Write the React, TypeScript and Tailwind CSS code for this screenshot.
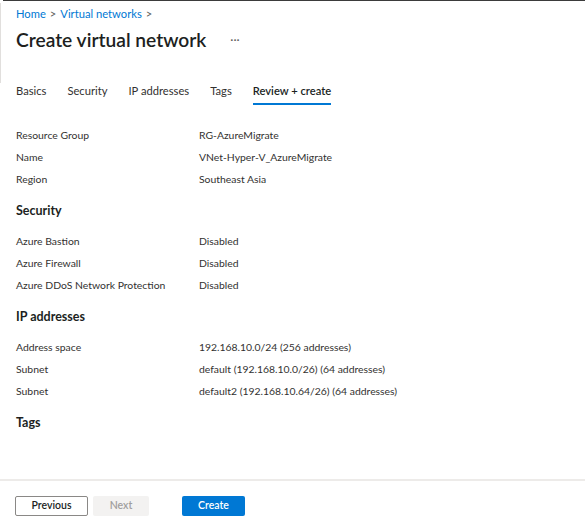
import { Fragment } from 'react';

const sections = [
  {
    title: null,
    rows: [
      ['Resource Group', 'RG-AzureMigrate'],
      ['Name', 'VNet-Hyper-V_AzureMigrate'],
      ['Region', 'Southeast Asia'],
    ],
  },
  {
    title: 'Security',
    rows: [
      ['Azure Bastion', 'Disabled'],
      ['Azure Firewall', 'Disabled'],
      ['Azure DDoS Network Protection', 'Disabled'],
    ],
  },
  {
    title: 'IP addresses',
    rows: [
      ['Address space', '192.168.10.0/24 (256 addresses)'],
      ['Subnet', 'default (192.168.10.0/26) (64 addresses)'],
      ['Subnet', 'default2 (192.168.10.64/26) (64 addresses)'],
    ],
  },
  { title: 'Tags', rows: [] },
];

const tabs = ['Basics', 'Security', 'IP addresses', 'Tags', 'Review + create'];

export default function App() {
  return (
    <div className="relative flex h-[529px] w-[585px] flex-col bg-white font-['Lato',sans-serif] text-[#323130]">
      <div className="absolute left-[3px] right-0 top-0 h-px bg-[#3b3b3b]" />
      <div className="absolute left-0 top-[3px] h-[80px] w-px bg-[#e1dfdd]" />

      <div className="flex-1 px-4">
        <div className="flex items-center gap-1 pt-[6px] text-[11.2px] text-[#0078d4]">
          <span>Home</span>
          <span className="text-[#605e5c]">&gt;</span>
          <span>Virtual networks</span>
          <span className="text-[#605e5c]">&gt;</span>
        </div>

        <div className="mt-[4px] flex items-center gap-6">
          <h1 className="text-[19.2px] font-semibold leading-[26px] text-[#201f1e]">Create virtual network</h1>
          <span className="text-[12px] text-[#605e5c]">···</span>
        </div>

        <div className="mt-[30px] flex gap-[21px] text-[11.2px]">
          {tabs.map((t) => (
            <div
              key={t}
              className={`pb-[3px] ${t === 'Review + create' ? 'border-b-2 border-[#0078d4] font-semibold text-[#201f1e]' : 'border-b-2 border-transparent text-[#323130]'}`}
            >
              {t}
            </div>
          ))}
        </div>

        <div className="mt-[20px] text-[10.4px]">
          {sections.map((s, i) => (
            <Fragment key={i}>
              {s.title && (
                <h2 className={`text-[12.5px] font-bold text-[#201f1e] ${i === 0 ? '' : 'mt-[10px]'} mb-[10px] leading-[20px]`}>{s.title}</h2>
              )}
              {s.rows.map(([k, v], j) => (
                <div key={j} className="grid h-[22px] grid-cols-[183px_1fr] items-center">
                  <span>{k}</span>
                  <span>{v}</span>
                </div>
              ))}
            </Fragment>
          ))}
        </div>
      </div>

      <div className="h-[2px] bg-[#edebe9]" />
      <div className="flex h-[48px] items-start gap-[5px] px-[15px] pt-[15px] text-[10.5px] font-semibold">
        <button className="h-[20px] w-[73px] rounded-[2px] border border-[#8a8886] bg-white text-[#201f1e]">Previous</button>
        <button className="h-[20px] w-[56px] rounded-[2px] bg-[#f3f2f1] text-[#a19f9d]">Next</button>
        <button className="ml-[28px] h-[20px] w-[63px] rounded-[2px] bg-[#0078d4] text-white">Create</button>
      </div>
    </div>
  );
}
